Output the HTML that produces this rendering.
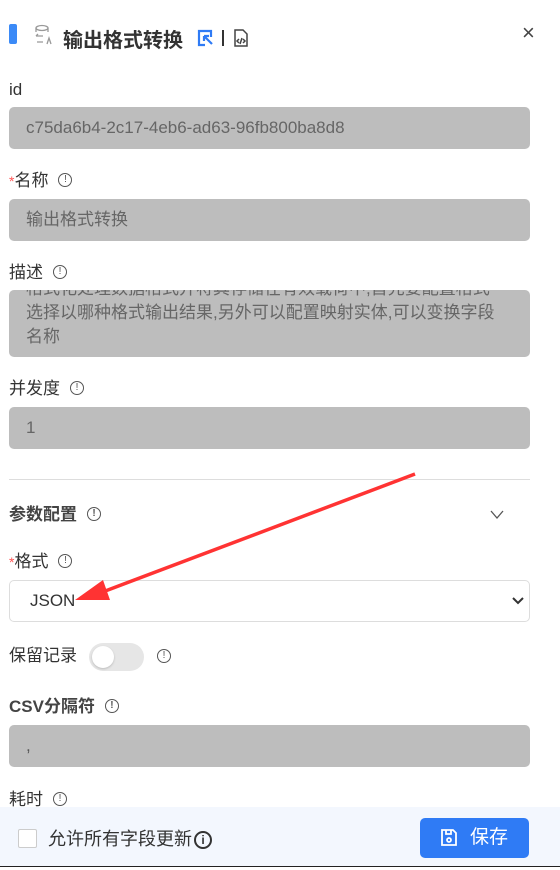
<!DOCTYPE html>
<html><head><meta charset="utf-8"><style>
*{box-sizing:border-box;margin:0;padding:0}
body{width:560px;height:870px;background:#fff;font-family:"Liberation Sans","Noto Sans CJK SC",sans-serif;color:#333;position:relative;overflow:hidden}
.a{position:absolute}
.lbl{position:absolute;left:9px;font-size:17px;color:#333;line-height:22px}
.in{position:absolute;left:9px;width:521px;height:42px;background:#bdbdbd;border-radius:5px;font-size:17px;color:#666;padding-left:17px;line-height:42px}
.i{display:inline-block;width:14px;height:14px;border:1.3px solid #555;border-radius:50%;font-size:10px;line-height:12px;text-align:center;vertical-align:middle;margin-left:10px;color:#555;margin-top:-3px}
.st{color:#f55;font-size:14px}
</style></head><body>
<div class="a" style="left:9px;top:24px;width:8px;height:20px;background:#3b8af7;border-radius:2px"></div>
<svg class="a" style="left:33px;top:24px" width="20" height="22" viewBox="0 0 20 22" fill="none" stroke="#999" stroke-width="1.3"><ellipse cx="9" cy="4" rx="6" ry="2.5"/><path d="M3 4v4M15 4v4M3 12h7M3 12l2-2M4 18h6M14 20l2-6 2 6"/></svg>
<div class="a" style="left:63px;top:24px;font-size:20px;font-weight:bold;color:#333">输出格式转换</div>
<svg class="a" style="left:197px;top:29px" width="18" height="18" viewBox="0 0 18 18" fill="none" stroke="#2f7bf5" stroke-width="2.2"><path d="M14 8V2H2v14h6"/><path d="M7 7l8 8M7 7h5M7 7v5"/></svg>
<div class="a" style="left:222px;top:30px;width:2px;height:16px;background:#333"></div>
<svg class="a" style="left:233px;top:29px" width="16" height="18" viewBox="0 0 16 18" fill="none" stroke="#444" stroke-width="1.5"><path d="M2 1h8l4 4v12H2z"/><path d="M6 10l-2 2 2 2M10 10l2 2-2 2M9 9l-2 6"/></svg>
<div class="a" style="left:522px;top:20px;font-size:22px;color:#444">×</div>

<div class="lbl" style="top:79px">id</div>
<div class="in" style="top:107px">c75da6b4-2c17-4eb6-ad63-96fb800ba8d8</div>
<div class="lbl" style="top:170px"><span class="st">*</span>名称<span class="i">!</span></div>
<div class="in" style="top:199px">输出格式转换</div>
<div class="lbl" style="top:262px">描述<span class="i">!</span></div>
<div class="in" style="top:290px;height:67px;line-height:24px;padding-top:0;overflow:hidden"><div style="margin-top:-13px">格式化处理数据格式并将其存储在有效载荷中,首先要配置格式<br>选择以哪种格式输出结果,另外可以配置映射实体,可以变换字段<br>名称</div></div>
<div class="lbl" style="top:378px">并发度<span class="i">!</span></div>
<div class="in" style="top:407px">1</div>
<div class="a" style="left:9px;top:479px;width:521px;height:1px;background:#ddd"></div>
<div class="lbl" style="top:504px;font-weight:bold;color:#444">参数配置<span class="i">!</span></div>
<svg class="a" style="left:490px;top:510px" width="14" height="10"><path d="M1 1l6 7 6-7" fill="none" stroke="#555" stroke-width="1.3"/></svg>
<div class="lbl" style="top:551px"><span class="st">*</span>格式<span class="i">!</span></div>
<div class="in" style="top:580px;background:#fff;border:1px solid #ddd;color:#333;padding-left:20px;line-height:40px">JSON</div>
<svg class="a" style="left:512px;top:597px" width="12" height="9"><path d="M1 1l5 5 5-5" fill="none" stroke="#333" stroke-width="2"/></svg>
<div class="lbl" style="top:645px">保留记录</div>
<div class="a" style="left:89px;top:643px;width:55px;height:28px;background:#e6e6e6;border-radius:14px"><div style="position:absolute;left:3px;top:3px;width:22px;height:22px;background:#fff;border-radius:50%;box-shadow:0 1px 2px #bbb"></div></div>
<span class="i a" style="left:147px;top:652px">!</span>
<div class="lbl" style="top:696px;font-weight:bold;color:#444">CSV分隔符<span class="i">!</span></div>
<div class="in" style="top:725px;color:#555">,</div>
<div class="lbl" style="top:789px">耗时<span class="i">!</span></div>
<div class="a" style="left:0;top:807px;width:560px;height:60px;background:#f3f7fe"></div>
<div class="a" style="left:0;top:866px;width:560px;height:1px;background:#222"></div>
<div class="a" style="left:18px;top:829px;width:19px;height:19px;background:#fff;border:1px solid #ccc;border-radius:2px"></div>
<div class="a" style="left:48px;top:825px;font-size:18px;color:#333">允许所有字段更新<span style="display:inline-block;width:18px;height:18px;border:2px solid #333;border-radius:50%;font-size:12px;line-height:14px;text-align:center;font-weight:bold;vertical-align:1px;margin-left:2px">i</span></div>
<div class="a" style="left:420px;top:818px;width:109px;height:40px;background:#2f7bf5;border-radius:5px;color:#fff;font-size:19px;line-height:40px;padding-left:50px">保存</div>
<svg class="a" style="left:440px;top:828px" width="18" height="19" viewBox="0 0 18 19" fill="none" stroke="#fff" stroke-width="1.8"><path d="M2 2h11l3 3v12H2z"/><path d="M6 2v4h5V2"/><circle cx="9" cy="12" r="2"/></svg>
<svg class="a" style="left:0;top:0" width="560" height="870"><path d="M415 474L100 593" stroke="#f33" stroke-width="3.5" fill="none"/><polygon points="75,600 103,580 110,600" fill="#f33"/></svg>
</body></html>
